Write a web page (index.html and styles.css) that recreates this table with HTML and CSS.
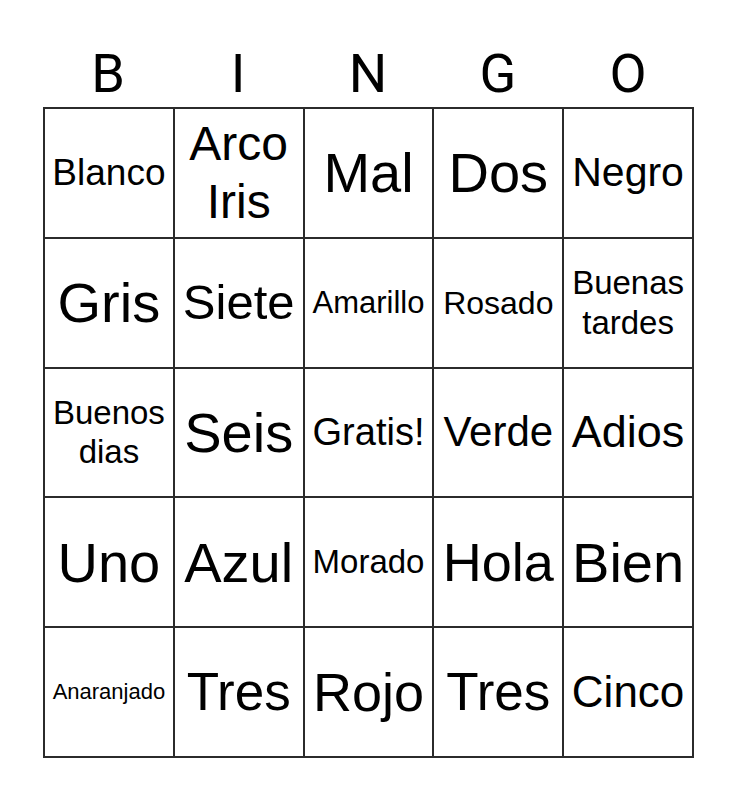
FILE: index.html
```html
<!DOCTYPE html>
<html lang="es">
<head>
<meta charset="utf-8">
<title>Bingo</title>
<link rel="stylesheet" href="styles.css">
</head>
<body>
<div class="card">
  <div class="header">
    <div class="letter">B</div>
    <div class="letter">I</div>
    <div class="letter">N</div>
    <div class="letter">G</div>
    <div class="letter">O</div>
  </div>
  <div class="grid">
    <div class="cell f37">Blanco</div>
    <div class="cell f48">Arco Iris</div>
    <div class="cell f56">Mal</div>
    <div class="cell f56">Dos</div>
    <div class="cell f41">Negro</div>

    <div class="cell f56">Gris</div>
    <div class="cell f49">Siete</div>
    <div class="cell f31">Amarillo</div>
    <div class="cell f32">Rosado</div>
    <div class="cell f33">Buenas tardes</div>

    <div class="cell f33">Buenos dias</div>
    <div class="cell f56">Seis</div>
    <div class="cell f38">Gratis!</div>
    <div class="cell f42">Verde</div>
    <div class="cell f45">Adios</div>

    <div class="cell f56">Uno</div>
    <div class="cell f56">Azul</div>
    <div class="cell f33">Morado</div>
    <div class="cell f54">Hola</div>
    <div class="cell f56">Bien</div>

    <div class="cell f22">Anaranjado</div>
    <div class="cell f53">Tres</div>
    <div class="cell f54">Rojo</div>
    <div class="cell f53">Tres</div>
    <div class="cell f44">Cinco</div>
  </div>
</div>
</body>
</html>
```
FILE: styles.css
```css
html, body {
  margin: 0;
  padding: 0;
  background: #ffffff;
}

.card {
  margin-left: 43px;
  padding-top: 42px;
  width: 651px;
}

.header {
  display: grid;
  grid-template-columns: repeat(5, 130px);
  height: 63px;
  margin-bottom: 2px;
}

.letter {
  font-family: Roboto, "Liberation Sans", sans-serif;
  font-size: 54px;
  line-height: 63px;
  text-align: center;
  color: #000;
}

.grid {
  box-sizing: border-box;
  display: grid;
  grid-template-columns: repeat(5, 1fr);
  grid-auto-rows: 129.8px;
  border-left: 2px solid #2b2b2b;
  border-top: 2px solid #2b2b2b;
  width: 651px;
}

.cell {
  box-sizing: border-box;
  border-right: 2px solid #2b2b2b;
  border-bottom: 2px solid #2b2b2b;
  display: flex;
  align-items: center;
  justify-content: center;
  text-align: center;
  padding: 0 6px;
  font-family: "Liberation Sans", Arial, sans-serif;
  line-height: 1.2;
  color: #000;
}

.f56 { font-size: 56px; }
.f54 { font-size: 54px; }
.f53 { font-size: 53px; }
.f49 { font-size: 49px; }
.f48 { font-size: 48px; }
.f45 { font-size: 45px; }
.f44 { font-size: 44px; }
.f42 { font-size: 42px; }
.f41 { font-size: 41px; }
.f38 { font-size: 38px; }
.f37 { font-size: 37px; }
.f33 { font-size: 33px; }
.f32 { font-size: 32px; }
.f31 { font-size: 31px; }
.f22 { font-size: 22px; }
```
